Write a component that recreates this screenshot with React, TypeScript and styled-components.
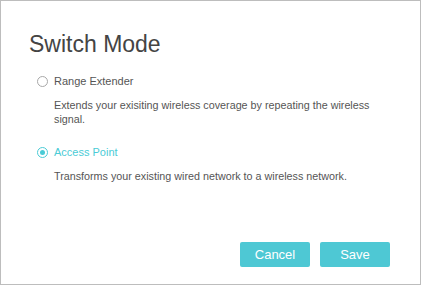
import React from "react";
import styled, { createGlobalStyle } from "styled-components";

const Global = createGlobalStyle`
  html, body { margin: 0; padding: 0; background: #fff; }
  body { font-family: "Liberation Sans", Arial, sans-serif; }
`;

const Dialog = styled.div`
  box-sizing: border-box;
  width: 421px;
  height: 285px;
  border: 1px solid #bdbdbd;
  background: #fff;
  display: flex;
  flex-direction: column;
  padding: 27px 30px 17px 28px;
`;

const Title = styled.h1`
  margin: 0;
  font-size: 23px;
  font-weight: normal;
  line-height: 32px;
  color: #444;
`;

const Options = styled.div`
  display: flex;
  flex-direction: column;
  gap: 18px;
  margin-top: 13px;
  padding-left: 8px;
`;

const Option = styled.div`
  display: flex;
  flex-direction: column;
`;

const OptionHead = styled.label`
  display: flex;
  align-items: center;
  gap: 6px;
  height: 16px;
`;

const Radio = styled.span<{ $checked?: boolean }>`
  box-sizing: border-box;
  width: 11px;
  height: 11px;
  border-radius: 50%;
  border: 1px solid ${(p) => (p.$checked ? "#4acbd6" : "#a8a8a8")};
  display: flex;
  align-items: center;
  justify-content: center;
  &::after {
    content: "";
    width: 5px;
    height: 5px;
    border-radius: 50%;
    background: ${(p) => (p.$checked ? "#4acbd6" : "transparent")};
  }
`;

const Label = styled.span<{ $active?: boolean }>`
  font-size: 11px;
  color: ${(p) => (p.$active ? "#4acbd6" : "#555")};
`;

const Desc = styled.p`
  margin: 9px 0 0 17px;
  font-size: 10.75px;
  line-height: 14px;
  color: #555;
  max-width: 330px;
`;

const Actions = styled.div`
  margin-top: auto;
  display: flex;
  justify-content: flex-end;
  gap: 10px;
`;

const Button = styled.button`
  width: 70px;
  height: 25px;
  border: none;
  border-radius: 2px;
  background: #4ec8d4;
  color: #fff;
  font-family: "Liberation Sans", Arial, sans-serif;
  font-size: 13px;
  padding: 0;
  cursor: pointer;
`;

export default function App() {
  return (
    <>
      <Global />
      <Dialog>
        <Title>Switch Mode</Title>
        <Options>
          <Option>
            <OptionHead>
              <Radio />
              <Label>Range Extender</Label>
            </OptionHead>
            <Desc>
              Extends your exisiting wireless coverage by repeating the wireless signal.
            </Desc>
          </Option>
          <Option>
            <OptionHead>
              <Radio $checked />
              <Label $active>Access Point</Label>
            </OptionHead>
            <Desc>Transforms your existing wired network to a wireless network.</Desc>
          </Option>
        </Options>
        <Actions>
          <Button>Cancel</Button>
          <Button>Save</Button>
        </Actions>
      </Dialog>
    </>
  );
}
